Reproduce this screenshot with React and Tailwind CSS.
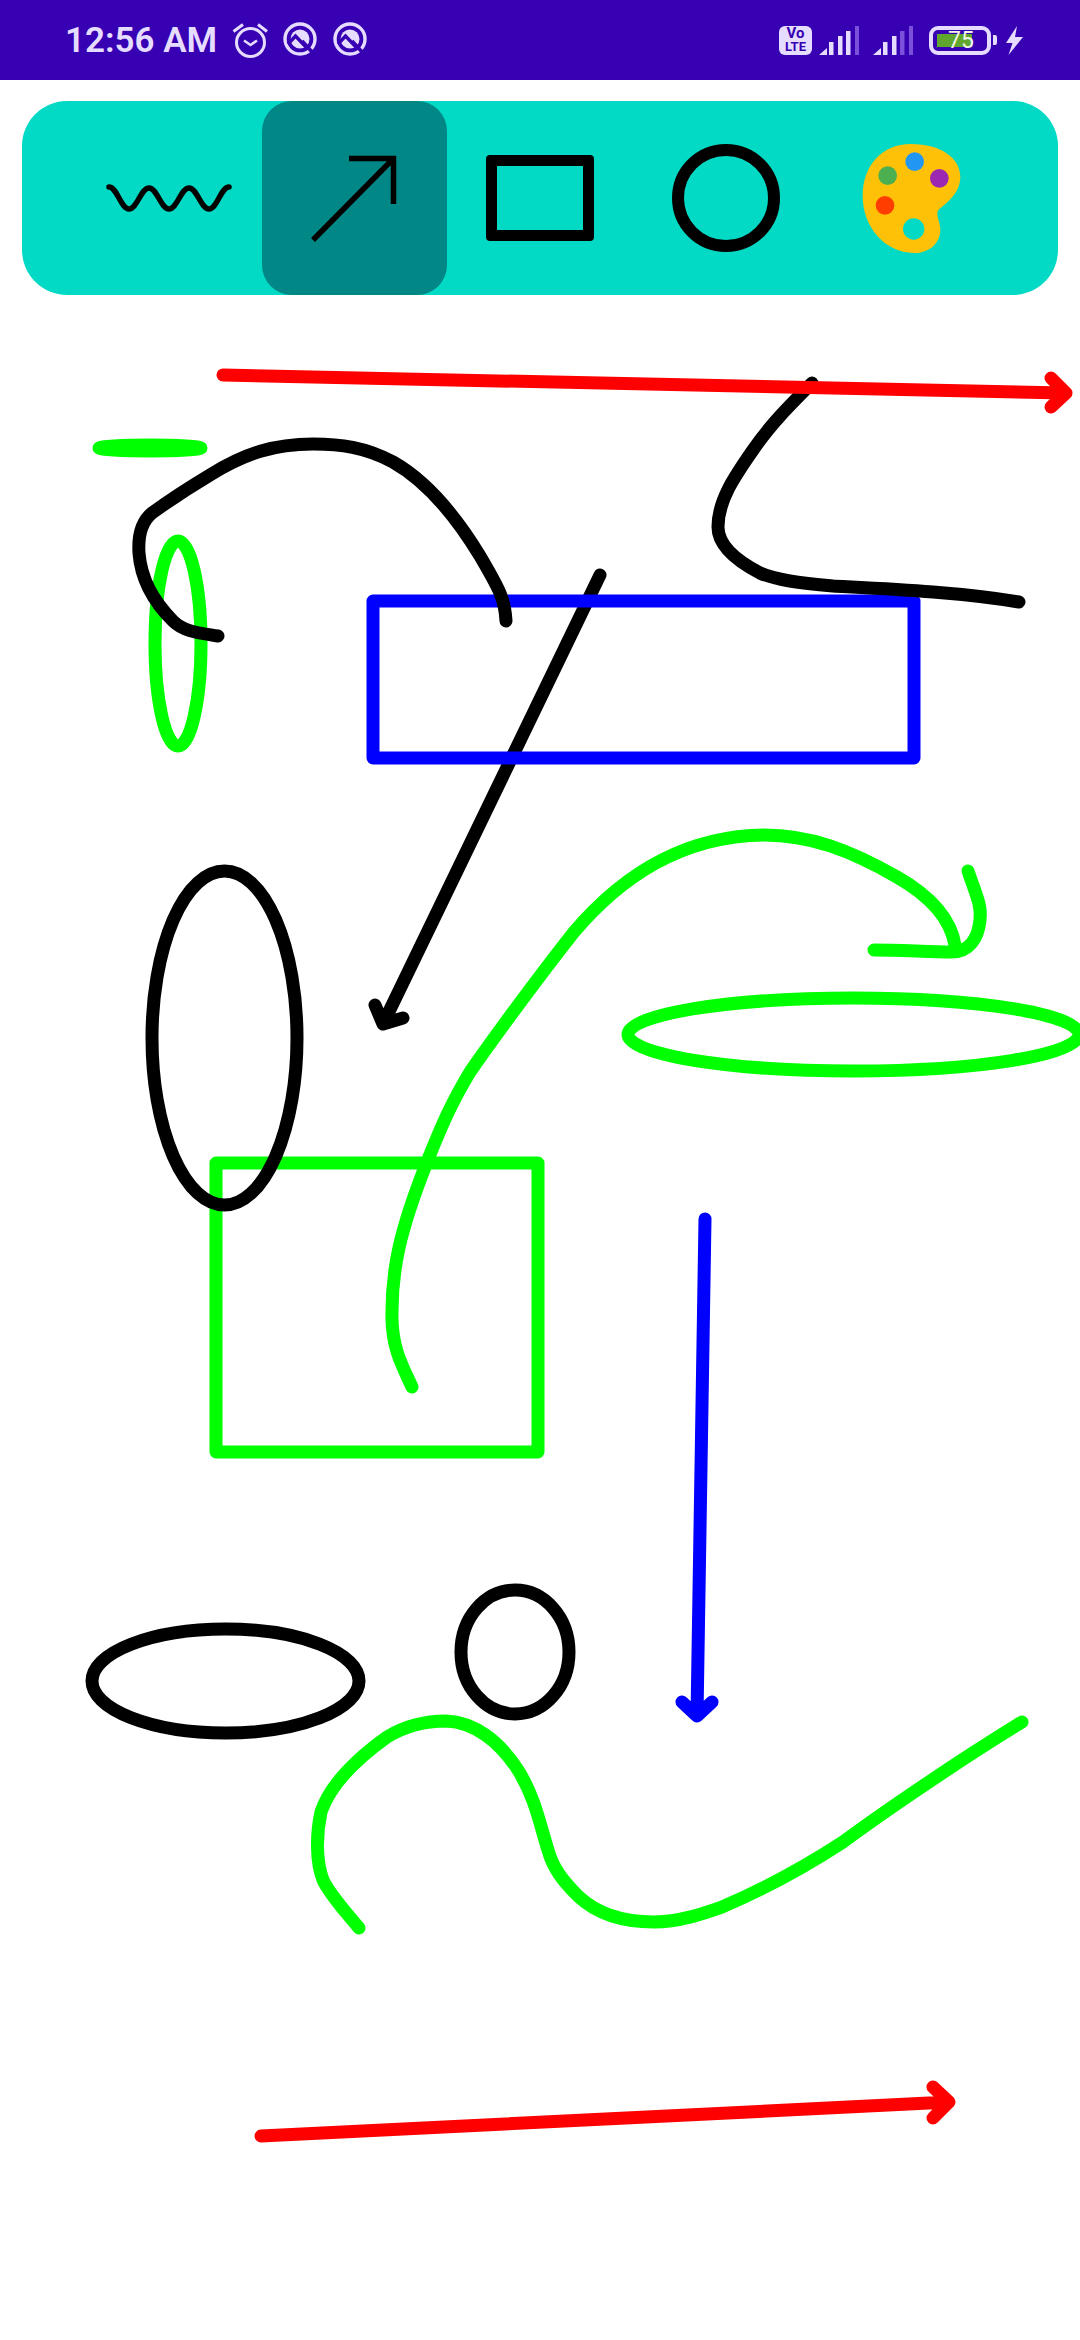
import React from 'react';

const LIGHT = '#E6DCFF';
const DIM = '#7B50DA';

// hand-drawn strokes on the canvas
const blackCurve = 'M506 621 C505 600 500 590 480 556 C455 515 425 480 393 462 C365 447 340 444 313 444 C275 444 245 453 210 475 C190 487 170 500 152 513 C141 522 138 537 139 553 C141 580 155 603 173 621 C184 632 200 633 218 636';
const blackCurveRight = 'M812 383 C790 405 770 425 753 450 C735 476 718 500 718 527 C718 545 735 560 760 573 C775 580 800 583 833 586 C890 589 960 592 1019 602';
const greenLong = 'M412 1387 C402 1365 393 1350 392 1320 C391 1270 400 1230 427 1162 C443 1122 452 1102 470 1072 C492 1040 540 975 574 932 C620 878 680 836 764 835 C810 835 850 850 897 877 C925 893 950 915 955 945';
const greenHook = 'M968 871 C975 892 982 905 980 920 C978 940 968 952 952 952 C930 952 900 950 874 950';
const greenBottom = 'M359 1928 C345 1911 330 1895 323 1880 C316 1862 316 1835 321 1812 C330 1785 355 1760 387 1737 C405 1726 425 1721 446 1721 C475 1722 500 1742 518 1770 C535 1797 540 1825 548 1850 C553 1868 562 1880 578 1896 C597 1914 622 1922 654 1922 C680 1922 705 1913 722 1907 C755 1893 800 1870 843 1842 C885 1811 960 1760 1022 1722';

const AlarmIcon = () => (
    <svg width="36" height="36" viewBox="0 0 36 36" fill="none" stroke={LIGHT} strokeWidth="3">
        <circle cx="18.5" cy="20.5" r="14" />
        <path d="M1.5 9.5 L11 2.5 M26 2.5 L35 9.5" />
        <path d="M12 18.5 L18.5 23 L25 18.5" strokeWidth="2.6" />
    </svg>
);

const RingIcon = () => (
    <svg width="36" height="36" viewBox="0 0 36 36" fill="none">
        <circle cx="18" cy="17" r="15" stroke={LIGHT} strokeWidth="3.4" />
        <circle cx="18" cy="17" r="9.5" fill={LIGHT} />
        <path d="M6 22 L13.5 14 L24 25" stroke="#3700B3" strokeWidth="3.4" />
        <path d="M20 19 L31 31" stroke="#3700B3" strokeWidth="3.6" />
    </svg>
);

const SignalIcon = ({ dimFrom }) => {
    const bars = [[10, 13], [19, 19], [27, 24], [36, 29]];
    return (
        <svg width="40" height="29" viewBox="0 0 40 29">
            <path d="M0 29 L8 22 L8 29 Z" fill={LIGHT} />
            {bars.map(([x, h], i) => (
                <rect key={x} x={x} y={29 - h} width="4.5" height={h} fill={i >= dimFrom ? DIM : LIGHT} />
            ))}
        </svg>
    );
};

const Battery = () => (
    <div className="flex items-center gap-[2px]">
        <div className="relative w-[62px] h-[29px] rounded-[9px] border-[4px] border-[#E6DCFF]">
            <div className="absolute left-[4px] top-[4px] w-[35px] h-[13px] bg-[#5FA52E]"></div>
            <span className="absolute left-[15px] top-[-1px] text-[23px] leading-[23px] text-[#F0F6E8] font-['Roboto',sans-serif]">75</span>
        </div>
        <div className="w-[4px] h-[10px] rounded-r-[2px] bg-[#E6DCFF]"></div>
    </div>
);

const StatusBar = () => (
    <div className="h-[80px] bg-[#3700B3] flex items-center justify-between pl-[65px] pr-[57px]">
        <div className="flex items-center">
            <span className="text-[35px] leading-none font-semibold text-[#E6DCFF] mr-[15px] font-['Roboto',sans-serif]">12:56 AM</span>
            <div className="flex items-center gap-[14px]">
                <AlarmIcon />
                <RingIcon />
                <RingIcon />
            </div>
        </div>
        <div className="flex items-center">
            <div className="w-[33px] h-[29px] rounded-[6px] bg-[#E6DCFF] flex flex-col items-center justify-center text-[#3700B3] font-bold font-['Roboto',sans-serif]">
                <span className="text-[15px] leading-[13px]">Vo</span>
                <span className="text-[13px] leading-[13px]">LTE</span>
            </div>
            <div className="ml-[7px]"><SignalIcon dimFrom={3} /></div>
            <div className="ml-[14px]"><SignalIcon dimFrom={2} /></div>
            <div className="ml-[16px]"><Battery /></div>
            <svg className="ml-[8px]" width="18" height="29" viewBox="0 0 18 29">
                <path d="M12 0 L1 17 L7.5 17 L3.5 29 L18 11 L10 11 Z" fill={LIGHT} />
            </svg>
        </div>
    </div>
);

const Palette = () => (
    <svg width="100" height="111" viewBox="720 160 300 333">
        <path d="M870 163 C960 163 1018 205 1018 262 C1018 305 985 335 955 358 C940 370 958 395 958 420 C958 460 925 490 880 490 C790 490 725 410 725 320 C725 225 785 163 870 163 Z" fill="#FFC107" />
        <circle cx="881" cy="216" r="28" fill="#2196F3" />
        <circle cx="800" cy="258" r="28" fill="#4CAF50" />
        <circle cx="955" cy="266" r="28" fill="#9C27B0" />
        <circle cx="792" cy="347" r="28" fill="#FF3D00" />
        <circle cx="878" cy="418" r="32" fill="#03DAC5" />
    </svg>
);

const Toolbar = () => (
    <div className="mx-[22px] mt-[21px] h-[194px] rounded-[45px] bg-[#03DAC5] flex justify-center">
        <div className="w-[185.5px] flex items-center justify-center">
            <svg width="126" height="32" viewBox="0 0 126 32" fill="none" stroke="#000" strokeWidth="5.5" strokeLinecap="round">
                <path d="M3 5 C11 5 15 27 23 27 C31 27 35 6 43 6 C51 6 55 27 63 27 C71 27 75 6 83 6 C91 6 95 27 103 27 C111 27 115 5 123 5" />
            </svg>
        </div>
        <div className="w-[185.5px] flex items-center justify-center rounded-[30px] bg-[#018786]">
            <svg width="90" height="90" viewBox="0 0 90 90" fill="none" stroke="#000" strokeWidth="5.5">
                <path d="M3 87 L83 6" />
                <path d="M39 5.5 L86 5.5 M83.5 3 L83.5 51" />
            </svg>
        </div>
        <div className="w-[185.5px] flex items-center justify-center">
            <div className="w-[108px] h-[86px] rounded-[4px] border-[11px] border-black"></div>
        </div>
        <div className="w-[185.5px] flex items-center justify-center">
            <div className="w-[108px] h-[108px] rounded-full border-[12px] border-black"></div>
        </div>
        <div className="w-[185.5px] flex items-center justify-center">
            <Palette />
        </div>
    </div>
);

const Canvas = () => (
    <svg className="block" width="1080" height="2030" viewBox="0 310 1080 2030" fill="none" strokeWidth="13" strokeLinecap="round" strokeLinejoin="round">
        <ellipse cx="150" cy="448" rx="51" ry="3" stroke="#00FF00" />
        <ellipse cx="178" cy="643.5" rx="23" ry="102.5" stroke="#00FF00" />

        <path d="M600 575 L383 1024 M375 1005 L383 1024 L403 1018" stroke="#000" />
        <rect x="373" y="601" width="541" height="157" stroke="#0000FF" />
        <path d={blackCurve} stroke="#000" />
        <path d={blackCurveRight} stroke="#000" />
        <path d="M223 375 L1066 393 M1051 378 L1066 393 L1051 407" stroke="#FF0000" />

        <rect x="216" y="1163" width="322" height="289" stroke="#00FF00" />
        <ellipse cx="224.5" cy="1038" rx="72.5" ry="167" stroke="#000" />
        <path d={greenLong} stroke="#00FF00" />
        <path d={greenHook} stroke="#00FF00" />
        <ellipse cx="853.5" cy="1034.5" rx="225.5" ry="36.5" stroke="#00FF00" />

        <path d="M705 1219 L697 1716 M682 1702 L697 1716 L712 1702" stroke="#0000FF" />
        <ellipse cx="225.5" cy="1681" rx="133.5" ry="52" stroke="#000" />
        <ellipse cx="515" cy="1652" rx="54" ry="62" stroke="#000" />
        <path d={greenBottom} stroke="#00FF00" />

        <path d="M261 2136 L949 2102 M933 2087 L949 2102 L933 2118" stroke="#FF0000" />
    </svg>
);

const App = () => {
    return (
        <div className="w-[1080px] h-[2340px] bg-white overflow-hidden flex flex-col">
            <StatusBar />
            <Toolbar />
            <div className="mt-[15px]">
                <Canvas />
            </div>
        </div>
    );
};

export default App;
